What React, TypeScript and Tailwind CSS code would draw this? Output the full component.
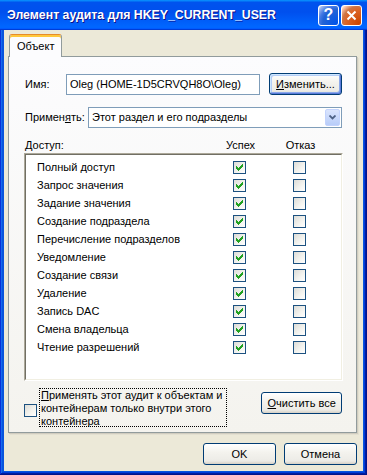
import React from "react";

const CHECK_PIXELS: [number, number][] = [
  [6, 0],
  [5, 1], [6, 1],
  [0, 2], [4, 2], [5, 2], [6, 2],
  [0, 3], [1, 3], [3, 3], [4, 3], [5, 3],
  [0, 4], [1, 4], [2, 4], [3, 4], [4, 4],
  [1, 5], [2, 5], [3, 5],
  [2, 6],
];

function Check({ checked }: { checked?: boolean }) {
  return (
    <div className="relative w-[13px] h-[13px] shrink-0 border border-[#1c5180] bg-[linear-gradient(135deg,#dcdcd7_0%,#f4f4f0_60%,#ffffff_100%)]">
      {checked && (
        <svg width="11" height="11" viewBox="0 0 11 11" className="absolute left-0 top-0" shapeRendering="crispEdges">
          {CHECK_PIXELS.map(([x, y], i) => (
            <rect key={i} x={x + 2} y={y + 2} width="1" height="1" fill="#21a121" />
          ))}
        </svg>
      )}
    </div>
  );
}

function Btn({ children, className, def }: { children: React.ReactNode; className: string; def?: boolean }) {
  return (
    <div
      className={
        def
          ? `flex items-center justify-center rounded-[3px] border border-[#003c74] bg-[linear-gradient(180deg,#ffffff_0%,#f4f3ee_40%,#ecebe6_85%,#d6d0c5_100%)] shadow-[inset_-1px_-1px_#5b7ad8,inset_1px_1px_#cee7ff,inset_-2px_-2px_#8aa8ea,inset_2px_2px_#b4cdf6] text-[11px] text-black ${className}`
          : `flex items-center justify-center rounded-[3px] border border-[#003c74] bg-[linear-gradient(180deg,#ffffff_0%,#f4f3ee_40%,#ecebe6_85%,#d6d0c5_100%)] text-[11px] text-black ${className}`
      }
    >
      {children}
    </div>
  );
}

const rows = [
  "Полный доступ",
  "Запрос значения",
  "Задание значения",
  "Создание подраздела",
  "Перечисление подразделов",
  "Уведомление",
  "Создание связи",
  "Удаление",
  "Запись DAC",
  "Смена владельца",
  "Чтение разрешений",
];

export default function App() {
  return (
    <div className="w-[367px] h-[475px] flex flex-col bg-[#0855dd] shadow-[inset_-1px_-1px_#00138c,inset_1px_1px_#0831d9,inset_-2px_-2px_#001ea0,inset_2px_2px_#166aee,inset_-3px_-3px_#003bda,inset_3px_3px_#0855dd] font-['Liberation_Sans',Arial,sans-serif] text-[11px] text-black leading-[13px]">
      {/* Title bar */}
      <div className="h-[30px] shrink-0 flex items-center pl-[7px] pr-[5px] bg-[linear-gradient(180deg,#0997ff_0%,#0053ee_8%,#0050ee_40%,#0066ff_88%,#0066ff_93%,#005bff_95%,#003dd7_96%,#003dd7_100%)]">
        <span className="flex-1 text-white font-bold text-[12.3px] leading-[16px] [text-shadow:1px_1px_#0f1089] whitespace-nowrap">
          Элемент аудита для HKEY_CURRENT_USER
        </span>
        <div className="flex gap-[2px]">
          <div className="w-[21px] h-[21px] rounded-[3px] border border-white bg-[radial-gradient(circle_at_90%_90%,#0054e9_0%,#2263d5_55%,#4479e4_70%,#a3bbec_90%,#ffffff_100%)] flex items-center justify-center text-white font-bold text-[16px] leading-[16px]">
            ?
          </div>
          <div className="w-[21px] h-[21px] rounded-[3px] border border-white bg-[radial-gradient(circle_at_90%_90%,#cc4600_0%,#dc6527_55%,#cd7546_70%,#ffccb2_90%,#ffffff_100%)] flex items-center justify-center">
            <svg width="11" height="11" viewBox="0 0 11 11">
              <path d="M1.5 1.5 L9.5 9.5 M9.5 1.5 L1.5 9.5" stroke="#ffffff" strokeWidth="2" />
            </svg>
          </div>
        </div>
      </div>

      {/* Client area */}
      <div className="flex-1 mx-[4px] mb-[4px] bg-[#ece9d8] flex flex-col pl-[4px] pr-[6px] pt-[4px]">
        {/* Tab */}
        <div className="flex">
          <div className="relative z-10 ml-[1px] w-[53px] h-[23px] rounded-t-[3px] border-x border-t border-[#919b9c] border-t-[#e68b2c] bg-[#fcfcfe] shadow-[inset_0_2px_#ffc83c] flex items-center pl-[7px] pt-[1px]">
            Объект
          </div>
        </div>

        {/* Panel */}
        <div className="-mt-[1px] h-[377px] border border-[#919b9c] bg-[linear-gradient(180deg,#fcfcfe,#f4f3ee)] shadow-[1px_1px_0_#d0ccbf,2px_2px_0_#e3e0d1] pl-[15px] pr-[14px] pt-[16px] pb-[5px] flex flex-col">
          {/* Name row */}
          <div className="flex items-center h-[22px]">
            <div className="ml-[1px] w-[41px]">Имя:</div>
            <div className="w-[194px] h-[21px] border border-[#7f9db9] bg-white pl-[3px] flex items-center whitespace-nowrap">
              Oleg (HOME-1D5CRVQH8O\Oleg)
            </div>
            <Btn def className="ml-[9px] w-[73px] h-[22px]">
              <span>
                <span className="underline">И</span>зменить...
              </span>
            </Btn>
          </div>

          {/* Apply row */}
          <div className="mt-[12px] flex items-center h-[21px]">
            <div className="ml-[1px] w-[63px] whitespace-nowrap">
              Примен<span className="underline">я</span>ть:
            </div>
            <div className="w-[254px] h-[21px] border border-[#7f9db9] bg-white pl-[3px] flex items-center">
              <span className="flex-1 whitespace-nowrap">Этот раздел и его подразделы</span>
              <div className="mr-[1px] w-[15px] h-[17px] rounded-[2px] border border-[#c3d3fd] bg-[linear-gradient(180deg,#dae4fd,#b8cdf9)] flex items-center justify-center">
                <svg width="7" height="5" viewBox="0 0 7 5">
                  <path d="M0.5 0.5 L3.5 3.5 L6.5 0.5" stroke="#4d6185" strokeWidth="1.8" fill="none" />
                </svg>
              </div>
            </div>
          </div>

          {/* Header */}
          <div className="mt-[11px] h-[13px] flex items-center">
            <div className="ml-[1px] w-[195px]">
              <span className="underline">Д</span>оступ:
            </div>
            <div className="w-[41px] text-center">Успех</div>
            <div className="ml-[19px] w-[41px] text-center">Отказ</div>
          </div>

          {/* List */}
          <div className="mt-[1px] w-[319px] h-[228px] shrink-0 border border-t-[#aca899] border-l-[#aca899] border-b-white border-r-white">
            <div className="h-full border border-t-[#716f64] border-l-[#716f64] border-b-[#f1efe2] border-r-[#f1efe2] bg-white pt-[3px] pl-[11px]">
              {rows.map((r) => (
                <div key={r} className="h-[18px] flex items-center">
                  <div className="w-[196px] whitespace-nowrap">{r}</div>
                  <Check checked />
                  <div className="ml-[47px]">
                    <Check />
                  </div>
                </div>
              ))}
            </div>
          </div>

          {/* Bottom row */}
          <div className="mt-[7px] h-[39px] flex items-start">
            <div className="mt-[16px]">
              <Check />
            </div>
            <div className="ml-[2px] w-[189px] h-[39px] border border-dotted border-black pl-[1px] leading-[13px] whitespace-nowrap">
              <span className="underline">П</span>рименять этот аудит к объектам и
              <br />
              контейнерам только внутри этого
              <br />
              контейнера
            </div>
            <Btn className="ml-[34px] mt-[4px] w-[81px] h-[22px]">
              <span>
                <span className="underline">О</span>чистить все
              </span>
            </Btn>
          </div>
        </div>

        {/* OK / Cancel */}
        <div className="mt-[10px] flex justify-end gap-[8px]">
          <Btn className="w-[73px] h-[22px]">OK</Btn>
          <Btn className="w-[73px] h-[22px]">Отмена</Btn>
        </div>
      </div>
    </div>
  );
}
